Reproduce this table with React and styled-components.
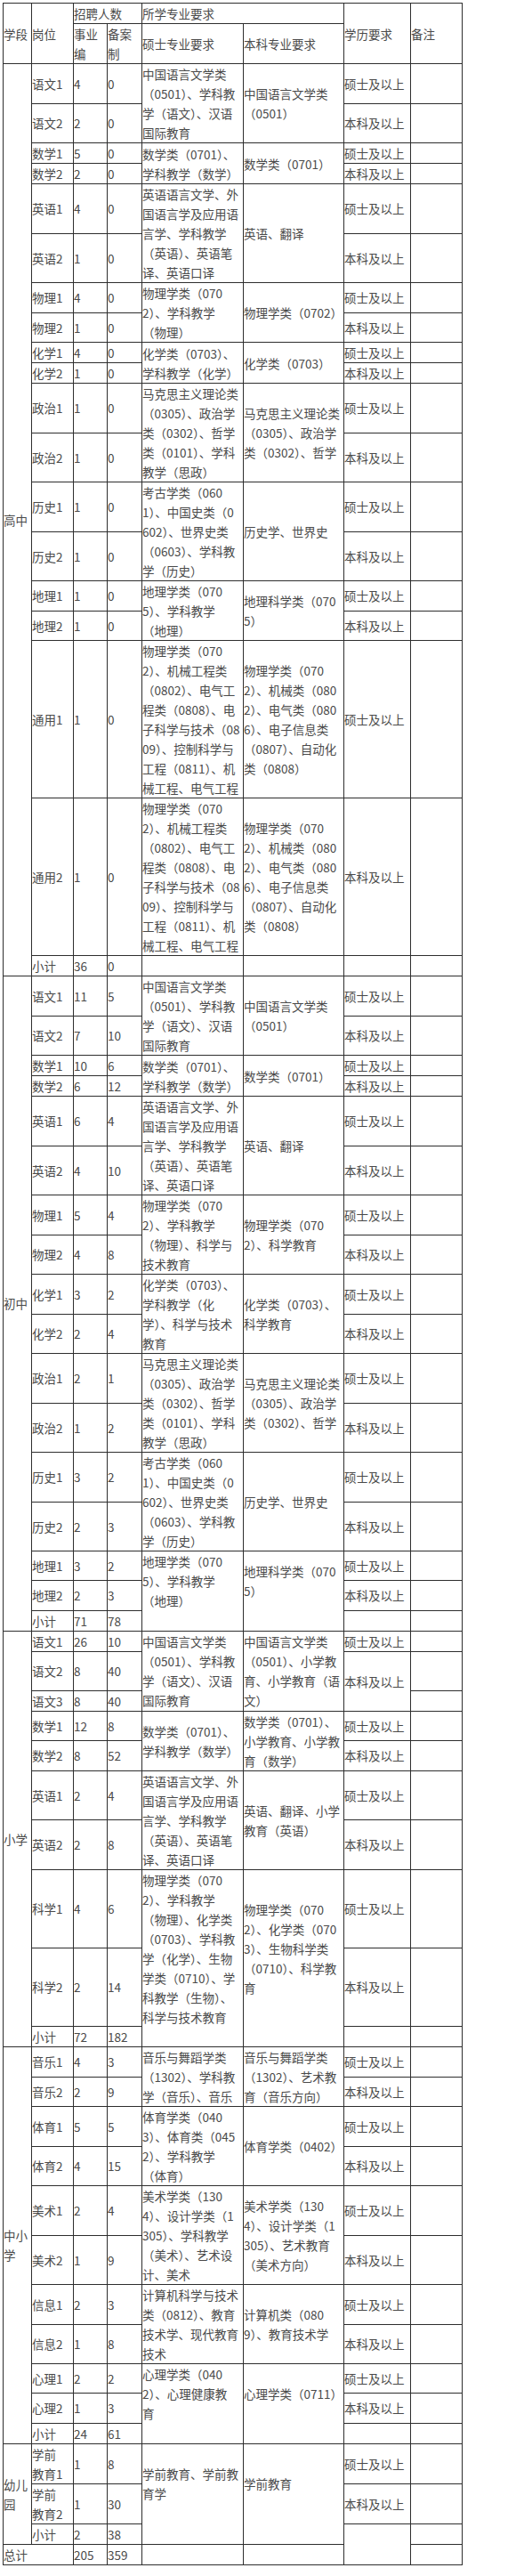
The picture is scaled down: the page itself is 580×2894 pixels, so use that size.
import React from 'react'
import styled, { createGlobalStyle } from 'styled-components'

const GlobalStyle = createGlobalStyle`
  html, body {
    margin: 0;
    padding: 0;
    background: #fff;
  }
  body {
    font-family: "Noto Sans CJK SC", "Noto Sans", sans-serif;
  }
`

const Page = styled.div`
  padding: 3px;
`

const Table = styled.table`
  border-collapse: collapse;
  table-layout: fixed;
  width: 517px;
  font-size: 13.5px;
  line-height: 22px;
  color: #4a4a4a;
`

const Row = styled.tr`
  height: ${p => (p.$h ? `${p.$h}px` : 'auto')};
`

const Cell = styled.td`
  border: 1px solid #2e2e2e;
  padding: 0;
  vertical-align: middle;
  text-align: left;
  font-weight: normal;
  white-space: nowrap;
  overflow: visible;
  ${p => p.$wrap && 'white-space: normal; word-break: break-all;'}
  ${p => p.$openTop && 'border-top-style: hidden;'}
`

const HeadCell = styled(Cell).attrs({ as: 'th' })``

const COLS = [32, 47, 38, 39, 114, 113, 75, 58]

const Lines = ({ text }) => {
  if (text == null) return null
  const lines = Array.isArray(text) ? text : [text]
  return lines.map((l, i) => (
    <React.Fragment key={i}>
      {i > 0 && <br />}
      {l}
    </React.Fragment>
  ))
}

const M = '硕士及以上'
const B = '本科及以上'

const YUWEN = ['中国语言文学类', '（0501）、学科教', '学（语文）、汉语', '国际教育']
const SHUXUE = ['数学类（0701）、', '学科教学（数学）']
const YINGYU = ['英语语言文学、外', '国语言学及应用语', '言学、学科教学', '（英语）、英语笔', '译、英语口译']
const ZHENGZHI = ['马克思主义理论类', '（0305）、政治学', '类（0302）、哲学', '类（0101）、学科', '教学（思政）']
const ZHENGZHI_B = ['马克思主义理论类', '（0305）、政治学', '类（0302）、哲学']
const LISHI = ['考古学类（060', '1）、中国史类（0', '602）、世界史类', '（0603）、学科教', '学（历史）']
const DILI = ['地理学类（070', '5）、学科教学', '（地理）']
const DILI_B = ['地理科学类（070', '5）']
const TONGYONG = ['物理学类（070', '2）、机械工程类', '（0802）、电气工', '程类（0808）、电', '子科学与技术（08', '09）、控制科学与', '工程（0811）、机', '械工程、电气工程']
const TONGYONG_B = ['物理学类（070', '2）、机械类（080', '2）、电气类（080', '6）、电子信息类', '（0807）、自动化', '类（0808）']

const sections = [
  {
    name: '高中',
    total: ['36', '0'],
    groups: [
      { rows: [{ p: '语文1', a: '4', b: '0', e: M }, { p: '语文2', a: '2', b: '0', e: B }], m: YUWEN, s: ['中国语言文学类', '（0501）'] },
      { rows: [{ p: '数学1', a: '5', b: '0', e: M }, { p: '数学2', a: '2', b: '0', e: B }], m: SHUXUE, s: '数学类（0701）' },
      { rows: [{ p: '英语1', a: '4', b: '0', e: M }, { p: '英语2', a: '1', b: '0', e: B }], m: YINGYU, s: '英语、翻译' },
      { rows: [{ p: '物理1', a: '4', b: '0', e: M }, { p: '物理2', a: '1', b: '0', e: B }], m: ['物理学类（070', '2）、学科教学', '（物理）'], s: '物理学类（0702）' },
      { rows: [{ p: '化学1', a: '4', b: '0', e: M }, { p: '化学2', a: '1', b: '0', e: B }], m: ['化学类（0703）、', '学科教学（化学）'], s: '化学类（0703）' },
      { rows: [{ p: '政治1', a: '1', b: '0', e: M }, { p: '政治2', a: '1', b: '0', e: B }], m: ZHENGZHI, s: ZHENGZHI_B },
      { rows: [{ p: '历史1', a: '1', b: '0', e: M }, { p: '历史2', a: '1', b: '0', e: B }], m: LISHI, s: '历史学、世界史' },
      { rows: [{ p: '地理1', a: '1', b: '0', e: M }, { p: '地理2', a: '1', b: '0', e: B }], m: DILI, s: DILI_B },
      { rows: [{ p: '通用1', a: '1', b: '0', e: M }], m: TONGYONG, s: TONGYONG_B },
      { rows: [{ p: '通用2', a: '1', b: '0', e: B }], m: TONGYONG, s: TONGYONG_B },
    ],
  },
  {
    name: '初中',
    total: ['71', '78'],
    open: true,
    groups: [
      { rows: [{ p: '语文1', a: '11', b: '5', e: M }, { p: '语文2', a: '7', b: '10', e: B }], m: YUWEN, s: ['中国语言文学类', '（0501）'] },
      { rows: [{ p: '数学1', a: '10', b: '6', e: M }, { p: '数学2', a: '6', b: '12', e: B }], m: SHUXUE, s: '数学类（0701）' },
      { rows: [{ p: '英语1', a: '6', b: '4', e: M }, { p: '英语2', a: '4', b: '10', e: B }], m: YINGYU, s: '英语、翻译' },
      { rows: [{ p: '物理1', a: '5', b: '4', e: M }, { p: '物理2', a: '4', b: '8', e: B }], m: ['物理学类（070', '2）、学科教学', '（物理）、科学与', '技术教育'], s: ['物理学类（070', '2）、科学教育'] },
      { rows: [{ p: '化学1', a: '3', b: '2', e: M }, { p: '化学2', a: '2', b: '4', e: B }], m: ['化学类（0703）、', '学科教学（化', '学）、科学与技术', '教育'], s: ['化学类（0703）、', '科学教育'] },
      { rows: [{ p: '政治1', a: '2', b: '1', e: M }, { p: '政治2', a: '1', b: '2', e: B }], m: ZHENGZHI, s: ZHENGZHI_B },
      { rows: [{ p: '历史1', a: '3', b: '2', e: M }, { p: '历史2', a: '2', b: '3', e: B }], m: LISHI, s: '历史学、世界史' },
      { rows: [{ p: '地理1', a: '3', b: '2', e: M }, { p: '地理2', a: '2', b: '3', e: B }], m: DILI, s: DILI_B },
    ],
  },
  {
    name: '小学',
    total: ['72', '182'],
    open: true,
    groups: [
      {
        rows: [
          { p: '语文1', a: '26', b: '10', e: M, h: 23 },
          { p: '语文2', a: '8', b: '40', e: B, es: 2, h: 44 },
          { p: '语文3', a: '8', b: '40', e: null, h: 23 },
        ],
        m: YUWEN,
        s: ['中国语言文学类', '（0501）、小学教', '育、小学教育（语', '文）'],
      },
      { rows: [{ p: '数学1', a: '12', b: '8', e: M }, { p: '数学2', a: '8', b: '52', e: B }], m: SHUXUE, s: ['数学类（0701）、', '小学教育、小学教', '育（数学）'] },
      { rows: [{ p: '英语1', a: '2', b: '4', e: M }, { p: '英语2', a: '2', b: '8', e: B }], m: YINGYU, s: ['英语、翻译、小学', '教育（英语）'] },
      {
        rows: [{ p: '科学1', a: '4', b: '6', e: M }, { p: '科学2', a: '2', b: '14', e: B }],
        m: ['物理学类（070', '2）、学科教学', '（物理）、化学类', '（0703）、学科教', '学（化学）、生物', '学类（0710）、学', '科教学（生物）、', '科学与技术教育'],
        s: ['物理学类（070', '2）、化学类（070', '3）、生物科学类', '（0710）、科学教', '育'],
      },
    ],
  },
  {
    name: '中小学',
    wrapName: true,
    total: ['24', '61'],
    open: true,
    groups: [
      { rows: [{ p: '音乐1', a: '4', b: '3', e: M }, { p: '音乐2', a: '2', b: '9', e: B }], m: ['音乐与舞蹈学类', '（1302）、学科教', '学（音乐）、音乐'], s: ['音乐与舞蹈学类', '（1302）、艺术教', '育（音乐方向）'] },
      { rows: [{ p: '体育1', a: '5', b: '5', e: M }, { p: '体育2', a: '4', b: '15', e: B }], m: ['体育学类（040', '3）、体育类（045', '2）、学科教学', '（体育）'], s: '体育学类（0402）' },
      { rows: [{ p: '美术1', a: '2', b: '4', e: M }, { p: '美术2', a: '1', b: '9', e: B }], m: ['美术学类（130', '4）、设计学类（1', '305）、学科教学', '（美术）、艺术设', '计、美术'], s: ['美术学类（130', '4）、设计学类（1', '305）、艺术教育', '（美术方向）'] },
      { rows: [{ p: '信息1', a: '2', b: '3', e: M }, { p: '信息2', a: '1', b: '8', e: B }], m: ['计算机科学与技术', '类（0812）、教育', '技术学、现代教育', '技术'], s: ['计算机类（080', '9）、教育技术学'] },
      { rows: [{ p: '心理1', a: '2', b: '2', e: M }, { p: '心理2', a: '1', b: '3', e: B }], m: ['心理学类（040', '2）、心理健康教', '育'], s: '心理学类（0711）' },
    ],
  },
  {
    name: '幼儿园',
    wrapName: true,
    total: ['2', '38'],
    open: true,
    groups: [
      {
        rows: [
          { p: ['学前', '教育1'], a: '1', b: '8', e: M },
          { p: ['学前', '教育2'], a: '1', b: '30', e: B },
        ],
        m: ['学前教育、学前教', '育学'],
        s: '学前教育',
      },
    ],
  },
]

function renderSection(sec) {
  const out = []
  const span = sec.groups.reduce((n, g) => n + g.rows.length, 0) + 1
  let first = true
  sec.groups.forEach((g, gi) => {
    g.rows.forEach((r, ri) => {
      out.push(
        <Row key={`${sec.name}-${gi}-${ri}`} $h={r.h}>
          {first && (
            <Cell rowSpan={span} $wrap={sec.wrapName}>
              {sec.name}
            </Cell>
          )}
          <Cell>
            <Lines text={r.p} />
          </Cell>
          <Cell>{r.a}</Cell>
          <Cell>{r.b}</Cell>
          {ri === 0 && (
            <Cell rowSpan={g.rows.length}>
              <Lines text={g.m} />
            </Cell>
          )}
          {ri === 0 && (
            <Cell rowSpan={g.rows.length}>
              <Lines text={g.s} />
            </Cell>
          )}
          {r.e !== null && <Cell rowSpan={r.es || 1}>{r.e}</Cell>}
          <Cell />
        </Row>
      )
      first = false
    })
  })
  out.push(
    <Row key={`${sec.name}-total`}>
      <Cell>小计</Cell>
      <Cell>{sec.total[0]}</Cell>
      <Cell>{sec.total[1]}</Cell>
      <Cell $openTop={sec.open} />
      <Cell $openTop={sec.open} />
      <Cell />
      <Cell />
    </Row>
  )
  return out
}

export default function App() {
  return (
    <Page>
      <GlobalStyle />
      <Table>
        <colgroup>
          {COLS.map((w, i) => (
            <col key={i} style={{ width: w }} />
          ))}
        </colgroup>
        <thead>
          <Row>
            <HeadCell rowSpan={2}>学段</HeadCell>
            <HeadCell rowSpan={2}>岗位</HeadCell>
            <HeadCell colSpan={2}>招聘人数</HeadCell>
            <HeadCell colSpan={2}>所学专业要求</HeadCell>
            <HeadCell rowSpan={2}>学历要求</HeadCell>
            <HeadCell rowSpan={2}>备注</HeadCell>
          </Row>
          <Row>
            <HeadCell>
              <Lines text={['事业', '编']} />
            </HeadCell>
            <HeadCell>
              <Lines text={['备案', '制']} />
            </HeadCell>
            <HeadCell>硕士专业要求</HeadCell>
            <HeadCell>本科专业要求</HeadCell>
          </Row>
        </thead>
        <tbody>
          {sections.map(renderSection)}
          <Row>
            <Cell colSpan={2}>总计</Cell>
            <Cell>205</Cell>
            <Cell>359</Cell>
            <Cell />
            <Cell />
            <Cell $openTop />
            <Cell />
          </Row>
        </tbody>
      </Table>
    </Page>
  )
}
